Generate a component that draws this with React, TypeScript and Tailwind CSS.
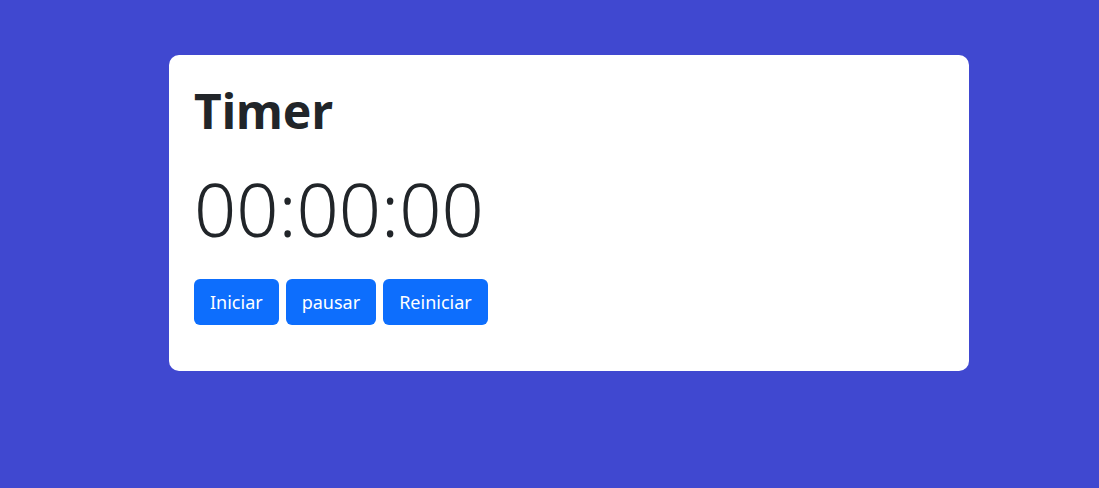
export default function App() {
  return (
    <div className="min-h-[488px] w-full bg-[#4048d0] pt-[55px]" style={{ fontFamily: '"Noto Sans", "Open Sans", sans-serif' }}>
      <div className="ml-[169px] w-[800px] rounded-[10px] bg-white px-[25px] pt-[27px] pb-[46px] text-[#212529]">
        <h1 className="text-[48px] font-bold leading-[1.2]">Timer</h1>
        <div className="mt-[25px] text-[74px] font-light leading-[1.2]">00:00:00</div>
        <div className="mt-[26px] flex gap-[7px]">
          <button className="h-[46px] rounded-[6px] bg-[#0d6efd] px-4 text-[18px] text-white">Iniciar</button>
          <button className="h-[46px] rounded-[6px] bg-[#0d6efd] px-4 text-[18px] text-white">pausar</button>
          <button className="h-[46px] rounded-[6px] bg-[#0d6efd] px-4 text-[18px] text-white">Reiniciar</button>
        </div>
      </div>
    </div>
  );
}
